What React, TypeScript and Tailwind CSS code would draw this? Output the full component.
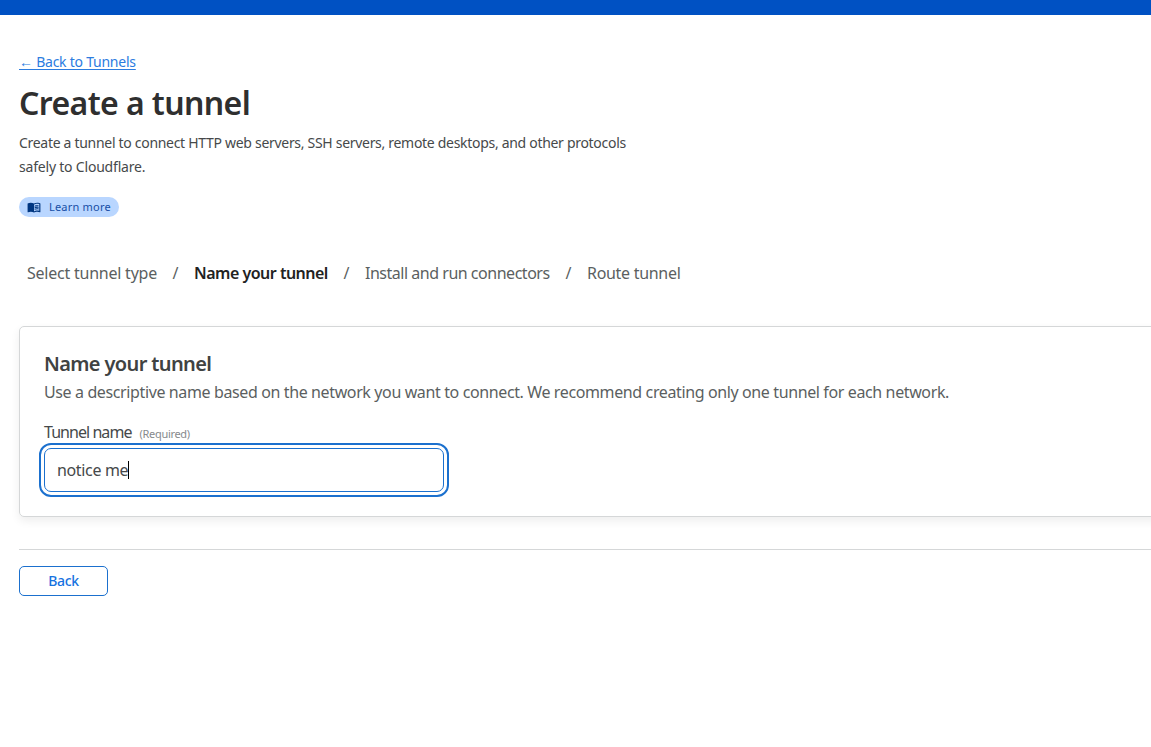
import { MdMenuBook } from "react-icons/md";

const steps = [
  { label: "Select tunnel type", cls: "w-[130px] tracking-[-0.23px]" },
  { label: "Name your tunnel", cls: "w-[134px] font-semibold text-[#222] tracking-[-0.5px]" },
  { label: "Install and run connectors", cls: "w-[185px] tracking-[-0.48px]" },
  { label: "Route tunnel", cls: "w-[94px] tracking-[-0.3px]" },
];

export default function App() {
  return (
    <div className="h-[747px] overflow-hidden bg-white font-['Noto_Sans',sans-serif] text-[#46494a]">
      <header className="h-[15px] bg-[#0051c3]" />
      <main className="pl-[19px] pt-[35px]">
        <a className="block h-6 w-max whitespace-nowrap text-sm leading-6 tracking-[-0.24px] text-[#2c7cdf] underline underline-offset-2">
          ← Back to Tunnels
        </a>
        <h1 className="mt-[9px] h-10 whitespace-nowrap text-[32px] leading-10 font-semibold tracking-[-0.6px] text-[#2f2f2f]">Create a tunnel</h1>
        <p className="mt-2 whitespace-nowrap text-sm leading-6 tracking-[-0.3px]">
          Create a tunnel to connect HTTP web servers, SSH servers, remote desktops, and other protocols
          <br />
          <span className="tracking-[-0.2px]">safely to Cloudflare.</span>
        </p>
        <a className="mt-[18px] flex h-5 w-[100px] items-center gap-2 rounded-full bg-[#b9d6ff] pl-2 text-[11px] tracking-[0.2px] whitespace-nowrap text-[#174ea6]">
          <MdMenuBook className="size-[14px] shrink-0 text-[#003681]" />
          Learn more
        </a>
        <ol className="mt-11 flex h-6 items-center pl-2 text-base leading-6 text-[#5b5f61]">
          {steps.map((s, i) => (
            <li key={s.label} className="flex whitespace-nowrap">
              {i > 0 && <span className="w-[37px] text-center">/</span>}
              <span className={s.cls}>{s.label}</span>
            </li>
          ))}
        </ol>
        <section className="mt-[41px] h-[191px] w-[1160px] rounded-[5px] border border-[#d5d7d8] pt-[23px] pl-6 shadow-[0_4px_10px_rgba(0,0,0,0.07)]">
          <h2 className="h-[27px] text-xl leading-[27px] font-semibold tracking-[-0.63px] text-[#404242]">Name your tunnel</h2>
          <p className="mt-[3px] h-6 whitespace-nowrap text-base leading-6 tracking-[-0.38px] text-[#5b5f61]">
            Use a descriptive name based on the network you want to connect. We recommend creating only one tunnel for each network.
          </p>
          <div className="mt-4 flex h-6 items-baseline gap-2 whitespace-nowrap">
            <label className="text-base leading-6 tracking-[-0.95px]">Tunnel name</label>
            <span className="text-[11px] tracking-[-0.3px] text-[#868a8d]">(Required)</span>
          </div>
          <div className="mt-1 flex h-11 w-[400px] items-center rounded-[7px] border border-[#1b70ce] pl-3 outline-2 outline-offset-[3px] outline-[#1b70ce]">
            <span className="text-base tracking-[-0.35px]">notice me</span>
            <span className="h-[18px] w-px bg-black" />
          </div>
        </section>
        <hr className="mt-8 w-[1160px] border-t border-[#d5d7d8]" />
        <button className="mt-4 h-[30px] w-[89px] rounded-[5px] border border-[#1b70ce] text-sm font-medium tracking-[-0.3px] text-[#1672df]">Back</button>
      </main>
    </div>
  );
}
